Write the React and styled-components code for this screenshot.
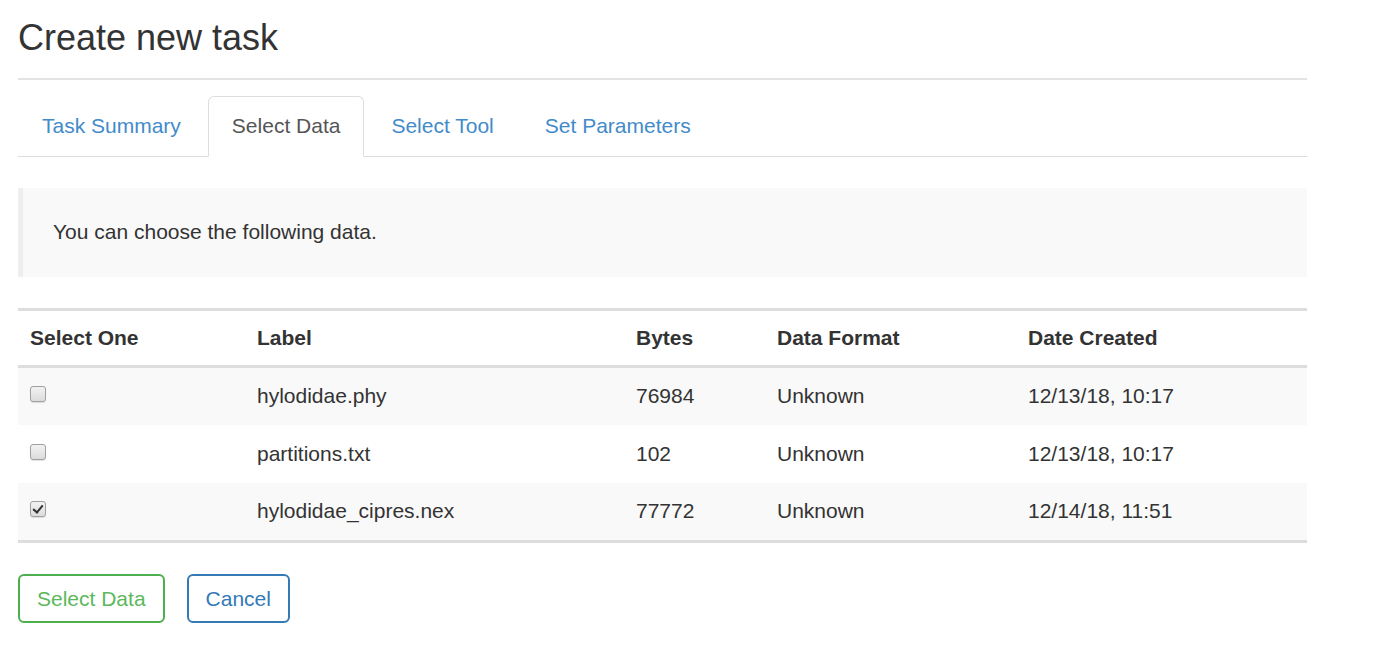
import styled, { createGlobalStyle } from "styled-components";

const GlobalStyle = createGlobalStyle`
  body {
    margin: 0;
    background: #fff;
    font-family: "Liberation Sans", Arial, Helvetica, sans-serif;
    font-size: 21px;
    line-height: 30px;
    color: #333;
  }
  * { box-sizing: border-box; }
`

const Page = styled.div`
  width: 1289px;
  margin-left: 18px;
  padding-top: 18px;
`

const Title = styled.h3`
  margin: 0;
  font-size: 36px;
  line-height: 39.6px;
  font-weight: 400;
  color: #333;
`

const Rule = styled.hr`
  margin: 20px 0 16px;
  border: 0;
  border-top: 2px solid #e3e3e3;
`

const TabBar = styled.ul`
  display: flex;
  margin: 0;
  padding: 0;
  list-style: none;
  border-bottom: 1.5px solid #ddd;
`

const Tab = styled.li`
  margin-right: 3px;
  margin-bottom: -1.5px;
  padding: 14.5px 23px 15px;
  line-height: 30px;
  border: 1.5px solid ${(p) => (p.$active ? "#ddd" : "transparent")};
  border-bottom-color: ${(p) => (p.$active ? "#fff" : "transparent")};
  border-radius: 6px 6px 0 0;
  background: ${(p) => (p.$active ? "#fff" : "transparent")};
  color: ${(p) => (p.$active ? "#555" : "#428bca")};
  cursor: pointer;
`

const Well = styled.div`
  margin-top: 31px;
  padding: 29px 30px 30px;
  background: #f9f9f9;
  border-left: 5px solid #eee;
`

const Table = styled.table`
  width: 100%;
  margin-top: 31px;
  border-collapse: collapse;
  border-top: 3px solid #ddd;
  border-bottom: 3px solid #ddd;
`

const HeadCell = styled.th`
  padding: 12px;
  text-align: left;
  font-weight: 700;
  border-bottom: 3px solid #ddd;
  width: ${(p) => p.$w}px;
`

const Row = styled.tr`
  background: ${(p) => (p.$striped ? "#f9f9f9" : "#fff")};
  & + & td {
    border-top: 1px solid #ddd;
  }
`

const Cell = styled.td`
  padding: 13.5px 12px 14px;
  line-height: 30px;
  vertical-align: middle;
`

const Check = styled.input.attrs({ type: "checkbox" })`
  appearance: none;
  display: block;
  position: relative;
  width: 16px;
  height: 16px;
  margin: 0 0 4px;
  border: 1px solid #a0a0a0;
  border-radius: 3px;
  background: linear-gradient(#f2f2f2, #dcdcdc);
  box-shadow: 0 1px 1px rgba(0, 0, 0, 0.12);
  &:checked::after {
    content: "";
    position: absolute;
    left: 4px;
    top: 1px;
    width: 4px;
    height: 8px;
    border: solid #333;
    border-width: 0 2.5px 2.5px 0;
    transform: rotate(40deg);
  }
`

const Actions = styled.div`
  display: flex;
  gap: 22px;
  margin-top: 31px;
`

const Button = styled.button`
  height: 49px;
  padding: 0 17px;
  font-family: inherit;
  font-size: 21px;
  line-height: 30px;
  background: #fff;
  border: 2px solid ${(p) => p.$border};
  border-radius: 6px;
  color: ${(p) => p.$color};
  cursor: pointer;
`

const rows = [
  { label: "hylodidae.phy", bytes: "76984", format: "Unknown", date: "12/13/18, 10:17", checked: false },
  { label: "partitions.txt", bytes: "102", format: "Unknown", date: "12/13/18, 10:17", checked: false },
  { label: "hylodidae_cipres.nex", bytes: "77772", format: "Unknown", date: "12/14/18, 11:51", checked: true },
];

const App = () => {
  return (
    <Page>
      <GlobalStyle />
      <Title>Create new task</Title>
      <Rule />
      <TabBar>
        <Tab>Task Summary</Tab>
        <Tab $active>Select Data</Tab>
        <Tab>Select Tool</Tab>
        <Tab>Set Parameters</Tab>
      </TabBar>
      <Well>You can choose the following data.</Well>
      <Table>
        <thead>
          <tr>
            <HeadCell $w={227}>Select One</HeadCell>
            <HeadCell $w={379}>Label</HeadCell>
            <HeadCell $w={141}>Bytes</HeadCell>
            <HeadCell $w={251}>Data Format</HeadCell>
            <HeadCell>Date Created</HeadCell>
          </tr>
        </thead>
        <tbody>
          {rows.map((r, i) => (
            <Row key={r.label} $striped={i % 2 === 0}>
              <Cell><Check defaultChecked={r.checked} /></Cell>
              <Cell>{r.label}</Cell>
              <Cell>{r.bytes}</Cell>
              <Cell>{r.format}</Cell>
              <Cell>{r.date}</Cell>
            </Row>
          ))}
        </tbody>
      </Table>
      <Actions>
        <Button $border="#4cae4c" $color="#5cb85c">Select Data</Button>
        <Button $border="#337ab7" $color="#337ab7">Cancel</Button>
      </Actions>
    </Page>
  );
};

export default App;
